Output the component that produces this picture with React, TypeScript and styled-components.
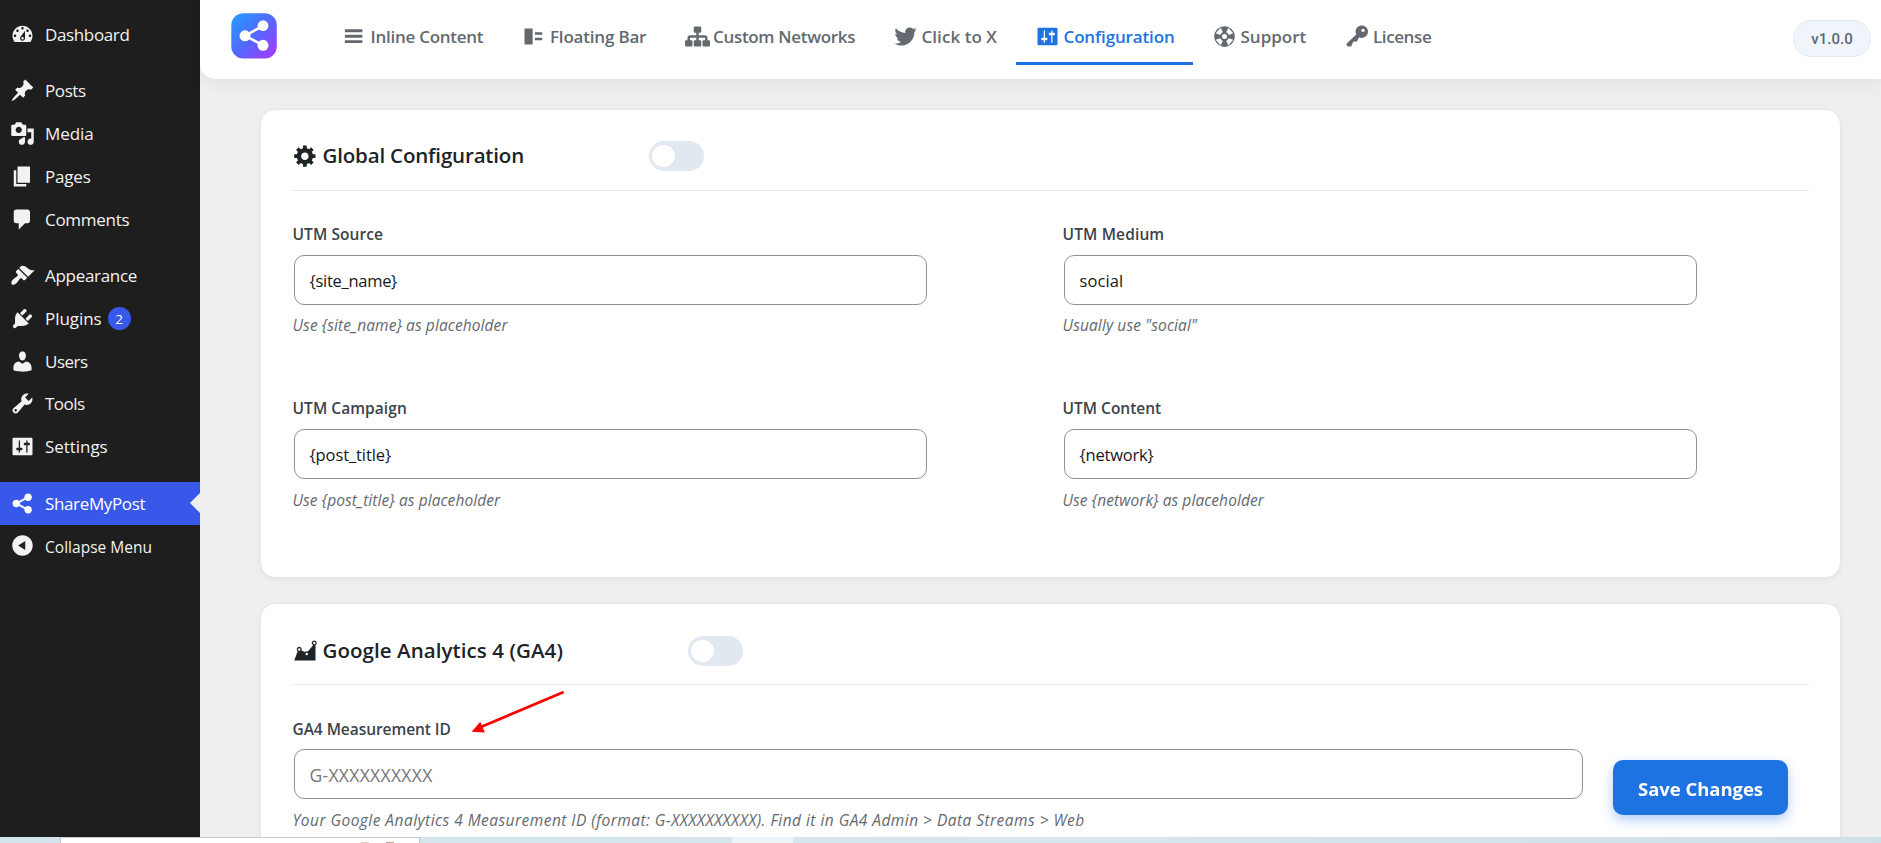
import React from "react";
import styled, { createGlobalStyle, css } from "styled-components";

const GlobalStyle = createGlobalStyle`
  * { box-sizing: border-box; }
  body {
    margin: 0;
    overflow: hidden;
    background: #efefef;
    font-family: "Open Sans", "Noto Sans", sans-serif;
  }
`;

/* ---------- icons (20 x 20 glyph grid) ---------- */

const paths = {
  dashboard:
    "M3.76 16h12.48c1.1-1.37 1.76-3.11 1.76-5 0-4.42-3.58-8-8-8s-8 3.58-8 8c0 1.89.66 3.63 1.76 5zM10 4c.55 0 1 .45 1 1s-.45 1-1 1-1-.45-1-1 .45-1 1-1zM6 6c.55 0 1 .45 1 1s-.45 1-1 1-1-.45-1-1 .45-1 1-1zm8 0c.55 0 1 .45 1 1s-.45 1-1 1-1-.45-1-1 .45-1 1-1zm-5.37 5.55L12 7v6c0 1.1-.9 2-2 2s-2-.9-2-2c0-.57.24-1.08.63-1.45zM4 10c.55 0 1 .45 1 1s-.45 1-1 1-1-.45-1-1 .45-1 1-1zm12 0c.55 0 1 .45 1 1s-.45 1-1 1-1-.45-1-1 .45-1 1-1zm-5 3c0-.55-.45-1-1-1s-1 .45-1 1 .45 1 1 1 1-.45 1-1z",
  post: "M10.44 3.02l1.82-1.82 6.36 6.35-1.83 1.82c-1.05-.68-2.48-.57-3.41.36l-.75.75c-.92.93-1.04 2.35-.35 3.41l-1.83 1.82-2.41-2.41-2.8 2.79c-.42.42-3.38 2.71-3.8 2.29s1.86-3.39 2.28-3.81l2.79-2.79L4.1 9.36l1.83-1.82c1.05.69 2.48.57 3.4-.36l.75-.75c.93-.92 1.05-2.35.36-3.41z",
  media:
    "M13 11V4c0-.55-.45-1-1-1h-1.67L9 1H5L3.67 3H2c-.55 0-1 .45-1 1v7c0 .55.45 1 1 1h10c.55 0 1-.45 1-1zM7 4.5c1.38 0 2.5 1.12 2.5 2.5S8.38 9.5 7 9.5 4.5 8.38 4.5 7 5.62 4.5 7 4.5zM14 6h5v10.5c0 1.38-1.12 2.5-2.5 2.5S14 17.88 14 16.5s1.12-2.5 2.5-2.5c.17 0 .34.02.5.05V9h-3V6zm-4 8.05V13h2v3.5c0 1.38-1.12 2.5-2.5 2.5S7 17.88 7 16.5 8.12 14 9.5 14c.17 0 .34.02.5.05z",
  page: "M6 15V2h10v13H6zm-1 1h8v2H3V5h2v11z",
  comments:
    "M5 2h9c1.1 0 2 .9 2 2v7c0 1.1-.9 2-2 2h-2l-5 5v-5H5c-1.1 0-2-.9-2-2V4c0-1.1.9-2 2-2z",
  appearance:
    "M14.48 11.06L7.41 3.99l1.5-1.5c.5-.56 2.3-.47 3.51.32 1.21.8 1.43 1.28 2.91 2.1 1.18.64 2.45 1.26 4.45.85zm-.71.71L6.7 4.7 4.93 6.47c-.39.39-.39 1.02 0 1.41l1.06 1.06c.39.39.39 1.03 0 1.42-.6.6-1.43 1.11-2.21 1.69-.35.26-.7.53-1.01.84C1.43 14.23.4 16.08 1.4 17.07c.99 1 2.84-.03 4.18-1.36.31-.31.58-.66.85-1.02.57-.78 1.08-1.61 1.69-2.21.39-.39 1.02-.39 1.41 0l1.06 1.06c.39.39 1.02.39 1.41 0z",
  plugins:
    "M13.11 4.36L9.87 7.6 8 5.73l3.24-3.24c.35-.34 1.05-.2 1.56.32.52.51.66 1.21.31 1.55zm-8 1.77l.91-1.12 9.01 9.01-1.19.84c-.71.71-2.63 1.16-3.82 1.16H6.14L4.9 17.26c-.59.59-1.54.59-2.12 0-.59-.58-.59-1.53 0-2.12l1.24-1.24v-3.88c0-1.13.4-3.19 1.09-3.89zm7.26 3.97l3.24-3.24c.34-.35 1.04-.21 1.55.31.52.51.66 1.21.31 1.55l-3.24 3.25z",
  users:
    "M10 9.25c-2.27 0-2.73-3.44-2.73-3.44C7 4.02 7.82 2 9.97 2c2.16 0 2.98 2.02 2.71 3.81 0 0-.41 3.44-2.68 3.44zm0 2.57L12.72 10c2.39 0 4.52 2.33 4.52 4.53v2.49s-3.65 1.13-7.24 1.13c-3.65 0-7.24-1.13-7.24-1.13v-2.49c0-2.25 1.94-4.48 4.47-4.48z",
  tools:
    "M16.68 9.77c-1.34 1.34-3.3 1.67-4.95.99l-5.41 6.52c-.99.99-2.59.99-3.58 0s-.99-2.59 0-3.57l6.52-5.42c-.68-1.65-.35-3.61.99-4.95 1.28-1.28 3.12-1.62 4.72-1.06l-2.89 2.89 2.82 2.82 2.86-2.87c.53 1.58.18 3.39-1.08 4.65zM3.81 16.21c.4.39 1.04.39 1.43 0 .4-.4.4-1.04 0-1.43-.39-.4-1.03-.4-1.43 0-.39.39-.39 1.03 0 1.43z",
  settings:
    "M18 16V4c0-.55-.45-1-1-1H3c-.55 0-1 .45-1 1v12c0 .55.45 1 1 1h14c.55 0 1-.45 1-1zM8 11h1c.55 0 1 .45 1 1s-.45 1-1 1H8v1.5c0 .28-.22.5-.5.5s-.5-.22-.5-.5V13H6c-.55 0-1-.45-1-1s.45-1 1-1h1V5.5c0-.28.22-.5.5-.5s.5.22.5.5V11zm5-2h-1c-.55 0-1-.45-1-1s.45-1 1-1h1V5.5c0-.28.22-.5.5-.5s.5.22.5.5V7h1c.55 0 1 .45 1 1s-.45 1-1 1h-1v5.5c0 .28-.22.5-.5.5s-.5-.22-.5-.5V9z",
  share:
    "M14.5 12c1.66 0 3 1.34 3 3s-1.34 3-3 3-3-1.34-3-3c0-.24.03-.46.09-.69l-4.38-2.3c-.55.61-1.33.99-2.21.99-1.66 0-3-1.34-3-3s1.34-3 3-3c.88 0 1.66.39 2.21.99l4.38-2.3c-.06-.23-.09-.45-.09-.69 0-1.66 1.34-3 3-3s3 1.34 3 3-1.34 3-3 3c-.88 0-1.66-.39-2.21-.99l-4.38 2.3c.06.23.09.45.09.69s-.03.46-.09.69l4.38 2.3c.55-.6 1.33-.99 2.21-.99z",
  collapse:
    "M10 1.8c4.5 0 8.2 3.7 8.2 8.2s-3.700 8.200-8.200 8.200S1.800 14.500 1.800 10 5.500 1.800 10 1.800zM12.200 6.400L6.500 10l5.700 3.600z",
  menu: "M2.300 4.200h14v2.300h-14zM2.300 8.600h14v2.300h-14zM2.300 12.900h14v2.300h-14z",
  floating: "M2 3.500h6.500v12.800H2zM10.300 6.500h5.900v2h-5.900zM10.300 11h5.900v2h-5.900z",
  networking:
    "M18 13h1c.55 0 1 .45 1 1.010v2.980c0 .56-.45 1.010-1 1.010h-4c-.55 0-1-.45-1-1.010v-2.980c0-.56.45-1.010 1-1.010h1v-2h-5v2h1c.55 0 1 .45 1 1.010v2.980c0 .56-.45 1.010-1 1.010H8c-.55 0-1-.45-1-1.010v-2.980c0-.56.45-1.010 1-1.010h1v-2H4v2h1c.55 0 1 .45 1 1.010v2.980C6 17.550 5.550 18 5 18H1c-.55 0-1-.45-1-1.010v-2.980C0 13.450.45 13 1 13h1v-2c0-1.100.9-2 2-2h5V7H8c-.55 0-1-.45-1-1.010V3.010C7 2.450 7.450 2 8 2h4c.55 0 1 .45 1 1.010v2.980C13 6.550 12.550 7 12 7h-1v2h5c1.100 0 2 .9 2 2v2z",
  bird: "M18.940 4.460c-.49.73-1.110 1.380-1.830 1.900.01.15.01.31.01.47 0 4.850-3.690 10.440-10.430 10.440-2.070 0-4-.61-5.630-1.650.29.03.58.05.88.05 1.720 0 3.300-.59 4.550-1.570-1.600-.03-2.950-1.090-3.420-2.550.22.04.45.07.69.07.33 0 .66-.05.96-.13-1.670-.34-2.940-1.820-2.940-3.600v-.04c.5.27 1.060.44 1.660.46-.98-.66-1.630-1.780-1.630-3.060 0-.67.18-1.300.5-1.840 1.810 2.220 4.510 3.680 7.560 3.830-.06-.27-.1-.55-.1-.84 0-2.020 1.650-3.660 3.670-3.660 1.060 0 2.010.44 2.680 1.160.83-.17 1.620-.47 2.330-.88-.28.85-.86 1.570-1.620 2.020.75-.08 1.450-.28 2.110-.58z",
  support:
    "M10 1.700a8.300 8.300 0 1 0 0 16.600 8.300 8.300 0 0 0 0-16.600zM10 8a2 2 0 1 1 0 4 2 2 0 0 1 0-4zM3 7.400L6.900 2.900L8.700 6.600C7.700 7 7 7.700 6.600 8.700zM13.100 2.900L17 7.400L13.400 8.700C13 7.700 12.300 7 11.300 6.600zM17 12.600L13.100 17.100L11.300 13.400C12.300 13 13 12.300 13.400 11.300zM6.900 17.100L3 12.600L6.600 11.300C7 12.300 7.700 13 8.700 13.400z",
  key: "M16.950 2.580c1.960 1.950 1.960 5.120 0 7.070-1.510 1.510-3.750 1.840-5.590 1.010l-1.870 3.310-2.990.31L5 18H2l-1-2 7.950-7.690c-.92-1.870-.62-4.180.93-5.730 1.950-1.960 5.120-1.960 7.070 0zm-2.510 3.790c.74 0 1.330-.6 1.330-1.340 0-.73-.59-1.330-1.330-1.330-.73 0-1.330.6-1.330 1.330 0 .74.6 1.340 1.330 1.340z",
  gear: "M18 12h-2.180c-.17.7-.44 1.350-.81 1.930l1.540 1.540-2.100 2.100-1.540-1.540c-.58.36-1.230.63-1.910.79V19H8v-2.180c-.68-.16-1.330-.43-1.910-.79l-1.540 1.540-2.120-2.120 1.540-1.540c-.36-.58-.63-1.230-.79-1.910H1V9.030h2.170c.16-.7.44-1.350.8-1.940L2.430 5.550l2.100-2.100 1.540 1.540c.58-.37 1.240-.64 1.930-.81V2h3v2.180c.68.16 1.330.43 1.910.79l1.540-1.540 2.120 2.120-1.540 1.540c.36.59.64 1.240.8 1.940H18V12zm-8.500 1.500c1.660 0 3-1.340 3-3s-1.340-3-3-3-3 1.340-3 3 1.340 3 3 3z",
  chart:
    "M18 18l.01-12.280c.59-.35.99-.99.99-1.720 0-1.100-.9-2-2-2s-2 .9-2 2c0 .78.45 1.450 1.100 1.780l-4.240 5.020c-.27-.12-.57-.18-.86-.18-.55 0-1.050.22-1.410.58L6.850 10c.02-.13.15-.6.15-1 0-1.100-.9-2-2-2s-2 .9-2 2c0 .62.29 1.170.73 1.540L1 18zM17 3a1 1 0 1 1 0 2 1 1 0 0 1 0-2zM5 8.200a1 1 0 1 1 0 2 1 1 0 0 1 0-2zM11 11.700a1 1 0 1 1 0 2 1 1 0 0 1 0-2z",
};

type IconName = keyof typeof paths;

const Svg = styled.svg<{ $size: number }>`
  display: block;
  flex: none;
  width: ${(p) => p.$size}px;
  height: ${(p) => p.$size}px;
  fill: currentColor;
  fill-rule: evenodd;
`;

const Icon = ({ name, size = 25 }: { name: IconName; size?: number }) => (
  <Svg $size={size} viewBox="0 0 20 20">
    <path d={paths[name]} />
  </Svg>
);

/* ---------- page frame ---------- */

const Page = styled.div`
  display: flex;
  flex-direction: column;
  height: 843px;
`;

const Admin = styled.div`
  display: flex;
  height: 837px;
  overflow: hidden;
`;

const Text = styled.span<{ $ls?: number }>`
  letter-spacing: ${(p) => p.$ls ?? 0}px;
  white-space: nowrap;
`;

/* ---------- sidebar ---------- */

const Sidebar = styled.nav`
  flex: none;
  width: 200px;
  padding-top: 13px;
  background: #1e1e1e;
`;

const MenuItem = styled.a<{ $gap?: boolean; $active?: boolean; $small?: boolean }>`
  position: relative;
  display: flex;
  align-items: center;
  gap: 10px;
  height: 42.75px;
  margin-top: ${(p) => (p.$gap ? 13.75 : 0)}px;
  padding-left: 10px;
  color: #f3f1f1;
  font-size: ${(p) => (p.$small ? 15.5 : 17)}px;
  ${(p) =>
    p.$small &&
    css`
      ${Text} {
        padding-top: 3px;
      }
    `}
  ${(p) =>
    p.$active &&
    css`
      color: #fff;
      background: #3858e9;
      &::after {
        content: "";
        position: absolute;
        right: 0;
        top: 11.500px;
        border: 10px solid transparent;
        border-left: 0;
        border-right-color: #efefef;
      }
    `}
`;

const Count = styled.span`
  display: flex;
  align-items: center;
  justify-content: center;
  width: 23px;
  height: 23px;
  margin: 1px 0 0 -4px;
  border-radius: 50%;
  background: #3858e9;
  color: #fff;
  font-size: 13.500px;
`;

interface MenuEntry {
  icon: IconName;
  label: string;
  ls: number;
  gap?: boolean;
  active?: boolean;
  small?: boolean;
  count?: number;
}

const menu: MenuEntry[] = [
  { icon: "dashboard", label: "Dashboard", ls: -0.36 },
  { icon: "post", label: "Posts", ls: -0.4, gap: true },
  { icon: "media", label: "Media", ls: -0.05 },
  { icon: "page", label: "Pages", ls: -0.2 },
  { icon: "comments", label: "Comments", ls: -0.28 },
  { icon: "appearance", label: "Appearance", ls: -0.3, gap: true },
  { icon: "plugins", label: "Plugins", ls: -0.05, count: 2 },
  { icon: "users", label: "Users", ls: -0.5 },
  { icon: "tools", label: "Tools", ls: -0.5 },
  { icon: "settings", label: "Settings", ls: -0.05 },
  { icon: "share", label: "ShareMyPost", ls: -0.36, gap: true, active: true },
  { icon: "collapse", label: "Collapse Menu", ls: 0.02, small: true },
];

/* ---------- header ---------- */

const Main = styled.main`
  flex: 1;
  min-width: 0;
  background: #efefef;
`;

const Header = styled.header`
  display: flex;
  height: 79px;
  padding: 13px 10px 0 31px;
  background: #fff;
  border-bottom-left-radius: 15px;
  box-shadow: 0 5px 18px rgba(0, 0, 0, 0.06);
`;

const Logo = styled.svg`
  display: block;
  flex: none;
  width: 46px;
  height: 46px;
`;

const Tabs = styled.div`
  display: flex;
  height: 52px;
  margin-left: 46px;
`;

const Tab = styled.a<{ $width: number; $active?: boolean }>`
  display: flex;
  align-items: center;
  gap: 3.500px;
  width: ${(p) => p.$width}px;
  padding: 0 0 3px 19px;
  color: ${(p) => (p.$active ? "#1e73e3" : "#646970")};
  border-bottom: 3px solid ${(p) => (p.$active ? "#1e73e3" : "transparent")};
  font-size: 17px;
  font-weight: 600;
`;

const tabs: { icon: IconName; label: string; ls: number; width: number; active?: boolean }[] = [
  { icon: "menu", label: "Inline Content", ls: -0.26, width: 179.5 },
  { icon: "floating", label: "Floating Bar", ls: -0.19, width: 163 },
  { icon: "networking", label: "Custom Networks", ls: -0.32, width: 208.5 },
  { icon: "bird", label: "Click to X", ls: 0.05, width: 142 },
  { icon: "settings", label: "Configuration", ls: -0.14, width: 177, active: true },
  { icon: "support", label: "Support", ls: 0, width: 132.5 },
  { icon: "key", label: "License", ls: -0.4, width: 126 },
];

const Version = styled.div`
  display: flex;
  align-items: center;
  justify-content: center;
  width: 78px;
  height: 37px;
  margin: 7px 0 0 auto;
  border: 1px solid #e2e8f0;
  border-radius: 19px;
  background: #f0f5fc;
  color: #5b6777;
  font: 500 15px Roboto, sans-serif;
`;

/* ---------- cards ---------- */

const Content = styled.div`
  display: flex;
  flex-direction: column;
  gap: 25px;
  padding: 30px 40px 0 60px;
`;

const Card = styled.section<{ $height: number }>`
  height: ${(p) => p.$height}px;
  padding: 31px 31px 0;
  border: 1px solid #e2e8f0;
  border-radius: 15px;
  background: #fff;
  box-shadow: 0 2px 5px rgba(0, 0, 0, 0.05);
`;

const CardHead = styled.div<{ $low?: boolean }>`
  display: flex;
  align-items: center;
  height: 50px;
  padding-bottom: ${(p) => (p.$low ? 17 : 19)}px;
  border-bottom: 1px solid #ebebec;
`;

const CardTitle = styled.h2`
  display: flex;
  align-items: center;
  gap: 5px;
  margin: -2px 0 0;
  padding-left: 0.500px;
  color: #1d2327;
  font-size: 20.500px;
  font-weight: 600;
`;

const Toggle = styled.span`
  width: 55px;
  height: 30px;
  margin-left: 125px;
  padding: 4px 3px;
  border-radius: 15px;
  background: #e2e8f0;
  &::before {
    content: "";
    display: block;
    width: 23px;
    height: 22px;
    border-radius: 50%;
    background: #fff;
  }
`;

const FieldGrid = styled.div`
  display: grid;
  grid-template-columns: 635px 635px;
  column-gap: 135px;
  grid-auto-rows: 174px;
`;

const Field = styled.div<{ $width: number }>`
  width: ${(p) => p.$width}px;
  padding-top: 33px;
`;

const Label = styled.label<{ $low?: boolean }>`
  display: block;
  height: 21px;
  margin-bottom: 10px;
  padding-top: ${(p) => (p.$low ? 1 : 0)}px;
  padding-left: 0.500px;
  color: #3c434a;
  font-size: 15.500px;
  font-weight: 600;
  line-height: 21px;
`;

const Input = styled.div<{ $placeholder?: boolean }>`
  display: flex;
  align-items: center;
  height: 50px;
  margin-left: 2px;
  padding: 1px 15px 0 14.500px;
  border: 1px solid #8f9295;
  border-radius: 10px;
  color: ${(p) => (p.$placeholder ? "#757575" : "#16181a")};
  font-size: ${(p) => (p.$placeholder ? 17.5 : 16.5)}px;
`;

const Hint = styled.p<{ $low?: boolean }>`
  margin: ${(p) => (p.$low ? 11 : 10)}px 0 0;
  padding-left: 0.500px;
  color: #646970;
  font-size: 15.500px;
  font-style: italic;
  line-height: 21px;
`;

const fields = [
  { label: "UTM Source", lls: 0.08, value: "{site_name}", vls: -0.28, hint: "Use {site_name} as placeholder", hls: 0.09 },
  { label: "UTM Medium", lls: 0.14, value: "social", vls: 0.1, hint: 'Usually use "social"', hls: 0.12 },
  { label: "UTM Campaign", lls: 0.06, value: "{post_title}", vls: -0.1, hint: "Use {post_title} as placeholder", hls: 0.08, low: true },
  { label: "UTM Content", lls: 0, value: "{network}", vls: -0.2, hint: "Use {network} as placeholder", hls: 0.08, low: true },
];

/* ---------- overlays ---------- */

const SaveButton = styled.button`
  position: fixed;
  right: 93px;
  bottom: 28px;
  width: 175px;
  height: 55px;
  padding: 2px 0 0;
  border: 0;
  border-radius: 10px;
  background: #1e73e3;
  box-shadow: 0 5px 12px rgba(30, 115, 227, 0.35);
  color: #fff;
  font: 700 18.500px "Open Sans", sans-serif;
`;

const Pointer = styled.svg`
  position: absolute;
  left: 468px;
  top: 686px;
  width: 100px;
  height: 50px;
`;

/* ---------- desktop strip under the page ---------- */

const Taskbar = styled.div`
  display: flex;
  flex: none;
  height: 6px;
  padding-left: 60px;
  background: linear-gradient(90deg, #d3e4ed, #d7e6ec 60%, #cfe0e6);
`;

const Preview = styled.div`
  display: flex;
  gap: 17px;
  width: 360px;
  padding: 4px 0 0 300px;
  border: 1px solid #c6c9cb;
  border-bottom: 0;
  background: #fff;
`;

const Speck = styled.i<{ $color: string }>`
  width: 8px;
  height: 1px;
  background: ${(p) => p.$color};
`;

const Highlight = styled.div`
  width: 61px;
  margin-left: 312px;
  background: #edf4f8;
`;

export default function App() {
  return (
    <Page>
      <GlobalStyle />
      <Admin>
        <Sidebar>
          {menu.map((m) => (
            <MenuItem key={m.label} $gap={m.gap} $active={m.active} $small={m.small}>
              <Icon name={m.icon} />
              <Text $ls={m.ls}>{m.label}</Text>
              {m.count && <Count>{m.count}</Count>}
            </MenuItem>
          ))}
        </Sidebar>
        <Main>
          <Header>
            <Logo viewBox="0 0 46 46">
              <defs>
                <linearGradient id="logo" x1="0" y1="0" x2="1" y2="1">
                  <stop offset="0.1" stopColor="#2a95ff" />
                  <stop offset="0.5" stopColor="#5468ff" />
                  <stop offset="0.9" stopColor="#9a3fff" />
                </linearGradient>
              </defs>
              <rect x="0.3" y="0.2" width="45.500" height="45.300" rx="12" fill="url(#logo)" />
              <path d="M32 12.800L14 22.800L32 32.200" fill="none" stroke="#fff" strokeWidth="2.600" />
              <circle cx="32" cy="12.700" r="5.400" fill="#fff" />
              <circle cx="14" cy="22.800" r="5.500" fill="#fff" />
              <circle cx="32" cy="32.300" r="5.500" fill="#fff" />
            </Logo>
            <Tabs>
              {tabs.map((t) => (
                <Tab key={t.label} $width={t.width} $active={t.active}>
                  <Icon name={t.icon} />
                  <Text $ls={t.ls}>{t.label}</Text>
                </Tab>
              ))}
            </Tabs>
            <Version>v1.0.0</Version>
          </Header>
          <Content>
            <Card $height={469}>
              <CardHead>
                <CardTitle>
                  <Icon name="gear" />
                  <Text $ls={-0.17}>Global Configuration</Text>
                </CardTitle>
                <Toggle />
              </CardHead>
              <FieldGrid>
                {fields.map((f) => (
                  <Field key={f.label} $width={635}>
                    <Label>
                      <Text $ls={f.lls}>{f.label}</Text>
                    </Label>
                    <Input>
                      <Text $ls={f.vls}>{f.value}</Text>
                    </Input>
                    <Hint $low={f.low}>
                      <Text $ls={f.hls}>{f.hint}</Text>
                    </Hint>
                  </Field>
                ))}
              </FieldGrid>
            </Card>
            <Card $height={360}>
              <CardHead $low>
                <CardTitle>
                  <Icon name="chart" />
                  <Text $ls={0.07}>Google Analytics 4 (GA4)</Text>
                </CardTitle>
                <Toggle />
              </CardHead>
              <Field $width={1291}>
                <Label $low>
                  <Text $ls={-0.06}>GA4 Measurement ID</Text>
                </Label>
                <Input $placeholder>
                  <Text $ls={0.3}>G-XXXXXXXXXX</Text>
                </Input>
                <Hint $low>
                  <Text $ls={0.46}>
                    Your Google Analytics 4 Measurement ID (format: G-XXXXXXXXXX). Find it in GA4 Admin &gt; Data
                    Streams &gt; Web
                  </Text>
                </Hint>
              </Field>
            </Card>
          </Content>
        </Main>
      </Admin>
      <Taskbar>
        <Preview>
          <Speck $color="#e8cdb8" />
          <Speck $color="#b79c92" />
        </Preview>
        <Highlight />
      </Taskbar>
      <SaveButton>
        <Text $ls={-0.05}>Save Changes</Text>
      </SaveButton>
      <Pointer viewBox="0 0 100 50">
        <path d="M94.500 6.500L14 40.500" stroke="#fe0000" strokeWidth="2.800" strokeLinecap="round" />
        <path d="M3.600 45.700L12.300 35.700L17 46.600z" fill="#fe0000" />
      </Pointer>
    </Page>
  );
}
